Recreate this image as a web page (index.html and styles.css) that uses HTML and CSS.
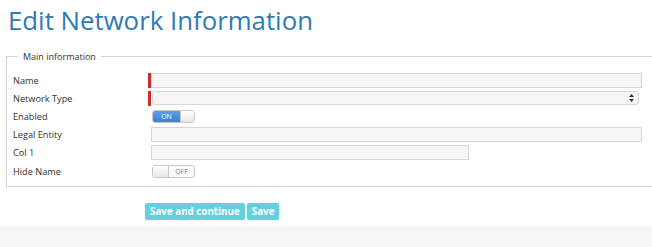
FILE: index.html
```html
<!DOCTYPE html>
<html lang="en">
<head>
    <meta charset="UTF-8">
    <title>Edit Network Information</title>
    <link rel="stylesheet" href="styles.css">
</head>
<body>
    <div class="page">
        <h1 class="page-title">Edit Network Information</h1>

        <form class="network-form">
            <fieldset class="main-info">
                <legend>Main information</legend>

                <div class="form-row">
                    <label for="name">Name</label>
                    <div class="field required">
                        <input type="text" id="name" class="text-input">
                    </div>
                </div>

                <div class="form-row">
                    <label for="networkType">Network Type</label>
                    <div class="field required">
                        <div class="select-box">
                            <span class="select-arrows">
                                <svg width="5" height="8" viewBox="0 0 5 8"><path d="M2.5 0L5 3H0z M2.5 8L0 5h5z" fill="#333"/></svg>
                            </span>
                        </div>
                    </div>
                </div>

                <div class="form-row">
                    <label>Enabled</label>
                    <div class="field">
                        <div class="toggle on"><span class="toggle-label">ON</span><span class="toggle-knob"></span></div>
                    </div>
                </div>

                <div class="form-row">
                    <label for="legalEntity">Legal Entity</label>
                    <div class="field">
                        <input type="text" id="legalEntity" class="text-input">
                    </div>
                </div>

                <div class="form-row">
                    <label for="col1">Col 1</label>
                    <div class="field">
                        <input type="text" id="col1" class="text-input short">
                    </div>
                </div>

                <div class="form-row">
                    <label>Hide Name</label>
                    <div class="field">
                        <div class="toggle off"><span class="toggle-knob"></span><span class="toggle-label">OFF</span></div>
                    </div>
                </div>
            </fieldset>

            <div class="form-actions">
                <button type="button" class="btn">Save and continue</button>
                <button type="button" class="btn">Save</button>
            </div>
        </form>
    </div>
    <div class="footer-band"></div>
</body>
</html>
```

FILE: styles.css
```css
* {
    margin: 0;
    padding: 0;
    box-sizing: border-box;
}

body {
    font-family: "Open Sans", sans-serif;
    color: #333;
    background-color: #fff;
    width: 652px;
    overflow: hidden;
}

.page {
    padding: 0 0 0 6px;
    width: 680px;
}

.page-title {
    font-size: 25.8px;
    font-weight: 400;
    color: #2e7bb3;
    line-height: 40px;
    padding: 0 0 0 2px;
    height: 47px;
}

.main-info {
    border: 1px solid #d4d4d4;
    border-right: none;
    padding: 8px 0 6px 6px;
    margin-top: 3px;
}

.main-info legend {
    font-size: 9px;
    padding: 0 5px;
    margin-left: 5px;
    color: #333;
}

.form-row {
    display: flex;
    align-items: center;
    height: 18.2px;
}

.form-row label {
    width: 135px;
    font-size: 9.2px;
    color: #333;
}

.field {
    display: flex;
    align-items: center;
    padding-left: 3px;
}

.field.required {
    border-left: 3px solid #c9302c;
    padding-left: 0;
    height: 15px;
}

.text-input {
    width: 491px;
    height: 15px;
    border: 1px solid #d6d6d6;
    background-color: #f5f5f5;
    outline: none;
}

.text-input.short {
    width: 318px;
}

.select-box {
    width: 487px;
    height: 14px;
    margin-left: 1px;
    border: 1px solid #d6d6d6;
    border-radius: 3px;
    background-color: #f5f5f5;
    display: flex;
    justify-content: flex-end;
    align-items: center;
    padding-right: 4px;
}

.select-arrows svg {
    display: block;
}

.toggle {
    display: flex;
    width: 43px;
    height: 13px;
    border: 1px solid #c8c8c8;
    border-radius: 3px;
    overflow: hidden;
    font-size: 7px;
    margin-left: 1px;
}

.toggle-label {
    width: 27px;
    display: flex;
    align-items: center;
    justify-content: center;
}

.toggle-knob {
    flex: 1;
    background: linear-gradient(#ffffff, #e6e6e6);
}

.toggle.on .toggle-label {
    background: linear-gradient(#5b9ee8, #3a7fd5);
    color: #fff;
}

.toggle.on .toggle-knob {
    border-left: 1px solid #c8c8c8;
}

.toggle.off .toggle-knob {
    flex: 0 0 16px;
    border-right: 1px solid #c8c8c8;
}

.toggle.off .toggle-label {
    color: #888;
    background-color: #fafafa;
}

.form-actions {
    display: flex;
    gap: 2px;
    padding: 16px 0 0 139px;
    height: 39px;
}

.btn {
    background-color: #62d0df;
    color: #fff;
    border: none;
    border-radius: 2px;
    font-family: "Open Sans", sans-serif;
    font-size: 9.8px;
    font-weight: 700;
    height: 17px;
    padding: 0 5px;
}

.footer-band {
    height: 30px;
    background-color: #f5f6f8;
}
```
